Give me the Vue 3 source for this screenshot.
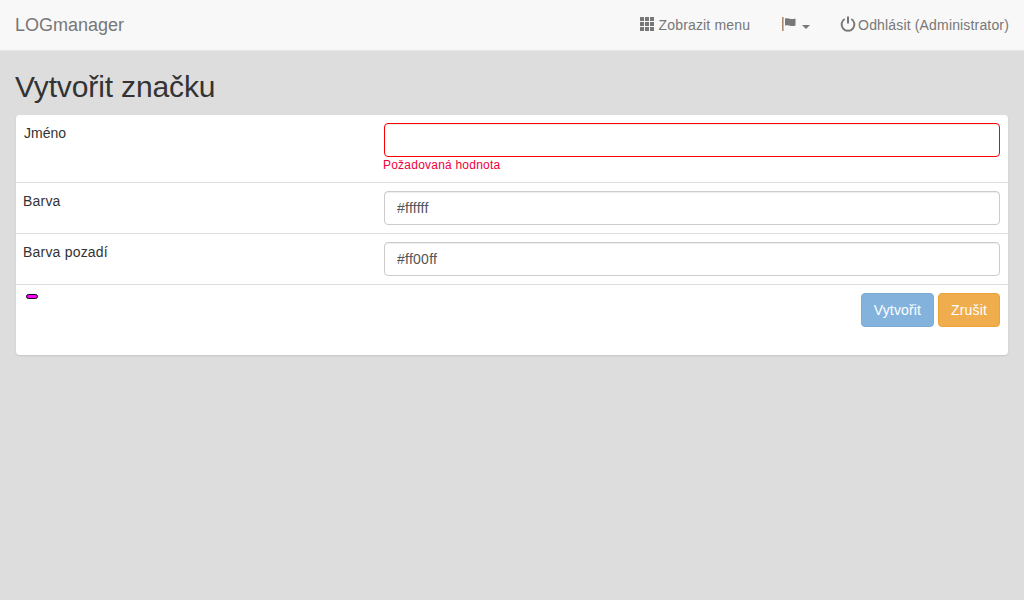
<script setup>
const rows = [
  { label: 'Barva', value: '#ffffff' },
  { label: 'Barva pozadí', value: '#ff00ff' },
]
</script>

<template>
  <div class="page">
    <nav class="navbar">
      <a class="brand">LOGmanager</a>
      <div class="nav-right">
        <a class="nav-item menu">
          <svg class="ico" width="14" height="14" viewBox="0 0 14 14" fill="#777">
            <rect x="0" y="0" width="4" height="4" /><rect x="5" y="0" width="4" height="4" /><rect x="10" y="0" width="4" height="4" />
            <rect x="0" y="5" width="4" height="4" /><rect x="5" y="5" width="4" height="4" /><rect x="10" y="5" width="4" height="4" />
            <rect x="0" y="10" width="4" height="4" /><rect x="5" y="10" width="4" height="4" /><rect x="10" y="10" width="4" height="4" />
          </svg>
          <span>Zobrazit menu</span>
        </a>
        <a class="nav-item flag">
          <svg class="ico" width="14" height="14" viewBox="0 0 14 14">
            <rect x="0" y="0" width="1.6" height="14" fill="#b08a6c" />
            <path d="M3 1.5 C5 0.9 6.5 1.2 8 1.8 C9.5 2.3 11.5 2.2 13.5 1.5 L13.5 8.5 C11.5 9.2 9.5 9.2 8 8.7 C6.5 8.2 5 8 3 8.6 Z" fill="#777" />
          </svg>
          <span class="caret"></span>
        </a>
        <a class="nav-item power">
          <svg class="ico" width="16" height="16" viewBox="0 0 16 16" fill="none" stroke="#777" stroke-width="2">
            <path d="M4.6 3 A6.4 6.4 0 1 0 11.4 3" />
            <path d="M8 0.5 V7.5" />
          </svg>
          <span>Odhlásit (Administrator)</span>
        </a>
      </div>
    </nav>

    <main class="content">
      <h1>Vytvořit značku</h1>
      <section class="card">
        <div class="row first">
          <label>Jméno</label>
          <div class="field">
            <input class="input invalid" type="text" />
            <div class="error">Požadovaná hodnota</div>
          </div>
        </div>
        <div v-for="row in rows" :key="row.label" class="row">
          <label>{{ row.label }}</label>
          <div class="field">
            <input class="input" type="text" :value="row.value" />
          </div>
        </div>
        <div class="footer">
          <span class="tag"></span>
          <div class="actions">
            <button class="btn primary" type="button">Vytvořit</button>
            <button class="btn warning" type="button">Zrušit</button>
          </div>
        </div>
      </section>
    </main>
  </div>
</template>

<style>
html, body { margin: 0; background: #ddd; }
</style>

<style scoped>
.page {
  min-height: 600px;
  background: #ddd;
  font-family: "Liberation Sans", Arial, sans-serif;
  font-size: 14px;
  line-height: 20px;
  color: #333;
}
.navbar {
  box-sizing: border-box;
  height: 51px;
  display: flex;
  align-items: center;
  justify-content: space-between;
  padding: 0 15px;
  background: #f8f8f8;
  border-bottom: 1px solid #e7e7e7;
}
.brand { font-size: 18px; color: #777; }
.nav-right { display: flex; align-items: center; color: #777; letter-spacing: .16px; }
.nav-item { display: flex; align-items: center; }
.ico { flex: none; margin-bottom: 2px; }
.menu { gap: 5px; }
.flag { margin-left: 32px; }
.caret {
  margin-left: 6px;
  margin-top: 3px;
  border-top: 4px solid #777;
  border-left: 4px solid transparent;
  border-right: 4px solid transparent;
}
.power { margin-left: 30px; gap: 2px; }
.content { padding: 0 16px; }
h1 {
  box-sizing: border-box;
  height: 64px;
  margin: 0 0 0 -1px;
  padding-top: 19px;
  font-size: 30px;
  font-weight: 400;
  line-height: 33px;
  letter-spacing: -.13px;
  color: #333;
}
.card {
  background: #fff;
  border-radius: 4px;
  box-shadow: 0 1px 2px rgba(0, 0, 0, .1);
}
.row {
  display: flex;
  box-sizing: border-box;
  padding: 8px;
  height: 51px;
  border-bottom: 1px solid #ddd;
}
.row.first { height: 68px; }
.row label {
  flex: none;
  width: 361px;
  margin-left: -1px;
  letter-spacing: .2px;
  color: #333;
}
.row.first label { width: 360px; margin-left: 0; letter-spacing: 0; }
.field { flex: 1; }
.input {
  display: block;
  box-sizing: border-box;
  width: 100%;
  height: 34px;
  padding: 6px 12px;
  font: inherit;
  letter-spacing: .25px;
  color: #555;
  background: #fff;
  border: 1px solid #ccc;
  border-radius: 4px;
  box-shadow: inset 0 1px 1px rgba(0, 0, 0, .075);
  outline: none;
}
.input.invalid { border-color: #f00; }
.error {
  margin-left: -1px;
  font-size: 12px;
  line-height: 17px;
  letter-spacing: .22px;
  color: #f0003c;
}
.footer {
  display: flex;
  justify-content: space-between;
  align-items: flex-start;
  box-sizing: border-box;
  height: 70px;
  padding: 8px 8px 0 10px;
}
.tag {
  box-sizing: border-box;
  width: 12px;
  height: 5px;
  margin-top: 1px;
  background: #f0f;
  border: 1px solid #000;
  border-radius: 3px;
}
.actions { display: flex; gap: 4px; }
.btn {
  box-sizing: border-box;
  height: 34px;
  padding: 6px 12px;
  font: inherit;
  letter-spacing: .15px;
  color: #fff;
  border: 1px solid transparent;
  border-radius: 4px;
}
.primary { background: #428bca; border-color: #357ebd; opacity: .65; }
.warning { background: #f0ad4e; border-color: #eea236; }
</style>
